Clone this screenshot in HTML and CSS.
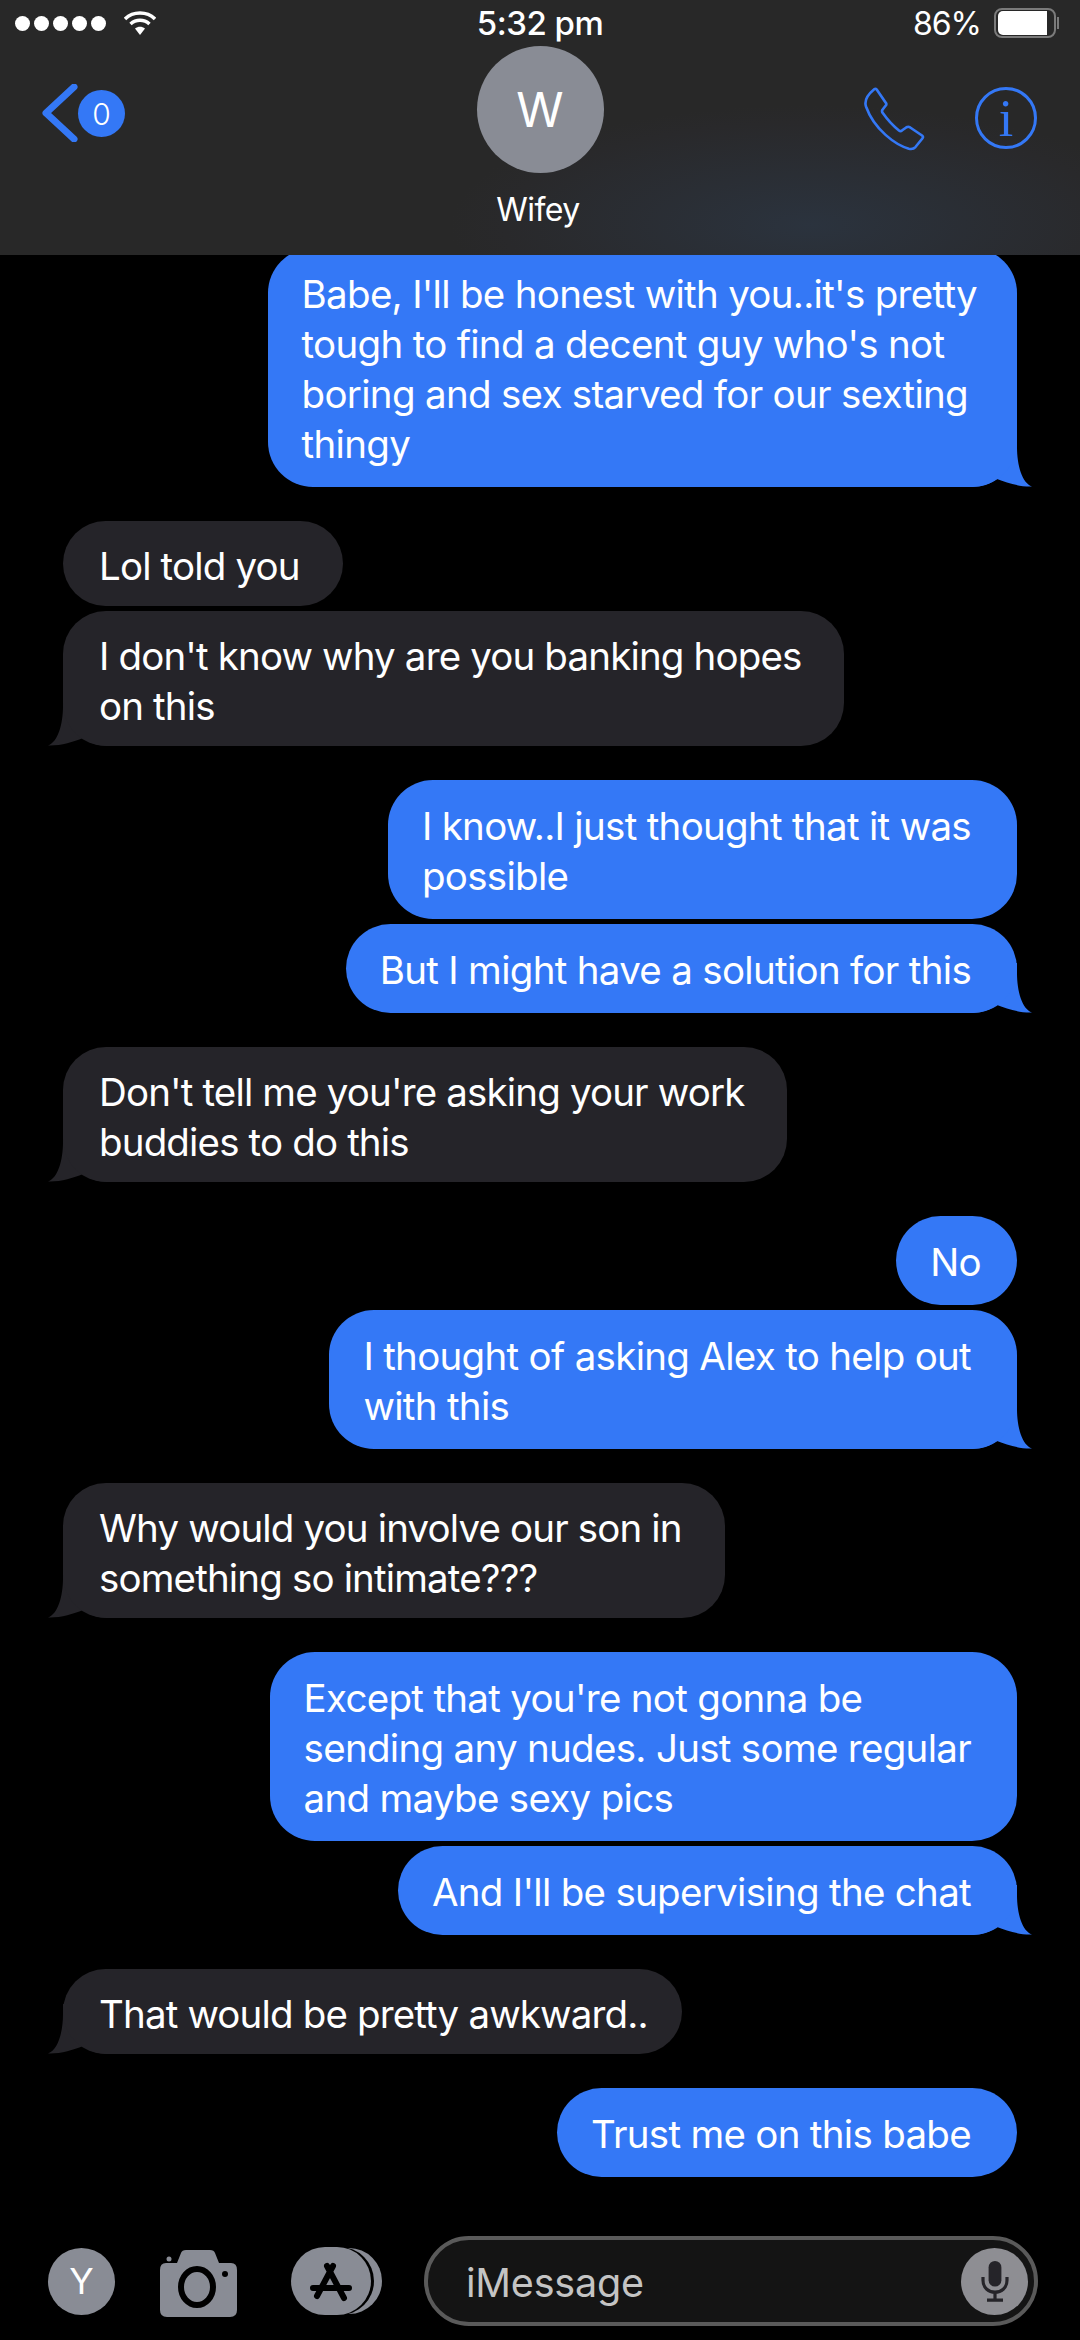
FILE: index.html
```html
<!DOCTYPE html>
<html lang="en">
<head>
  <meta charset="UTF-8">
  <meta name="viewport" content="width=device-width, initial-scale=1.0">
  <title>Wifey</title>
  <link rel="stylesheet" href="styles.css">
</head>
<body>
  <!-- top bar -->
  <header class="top">
    <div class="status-bar">
      <div class="status-left">
        <div class="signal"><i></i><i></i><i></i><i></i><i></i></div>
        <svg class="wifi" viewBox="0 0 32 26">
          <path d="M1 9 C9 1 23 1 31 9" />
          <path d="M6.500 14 C12 9 20 9 25.500 14" />
          <path class="wedge" d="M11 18.500 C14 16 18 16 21 18.500 L16 25 Z" />
        </svg>
      </div>
      <div class="clock">5:32 pm</div>
      <div class="status-right">
        <span>86%</span>
        <div class="battery"><div class="battery-fill"></div></div>
      </div>
    </div>

    <div class="nav">
      <div class="nav-left">
        <svg class="chevron" viewBox="0 0 36 58"><path d="M32 3 L4 29 L32 55" /></svg>
        <div class="badge">0</div>
      </div>
      <div class="contact">
        <div class="avatar">W</div>
        <div class="contact-name">Wifey</div>
      </div>
      <div class="nav-right">
        <svg class="phone" viewBox="-4 -4 188 194">
          <path d="M30 3 Q34 0 38 4 L66 45 Q68 49 65 52 L55 65 Q52 70 56 75 C70 95 85 112 105 128 Q110 132 114 128 L128 118 Q133 115 138 118 L175 143 Q180 147 176 152 L155 178 Q148 186 135 183 C95 172 30 125 5 55 Q-3 30 30 3 Z" />
        </svg>
        <div class="info">i</div>
      </div>
    </div>
  </header>

  <!-- conversation -->
  <main class="thread">
    <div class="msg out tail wide">Babe, I'll be honest with you..it's pretty<br>tough to find a decent guy who's not<br>boring and sex starved for our sexting<br>thingy</div>

    <div class="msg in">Lol told you</div>
    <div class="msg in cont tail">I don't know why are you banking hopes<br>on this</div>

    <div class="msg out">I know..I just thought that it was<br>possible</div>
    <div class="msg out cont tail">But I might have a solution for this</div>

    <div class="msg in tail">Don't tell me you're asking your work<br>buddies to do this</div>

    <div class="msg out short">No</div>
    <div class="msg out cont tail">I thought of asking Alex to help out<br>with this</div>

    <div class="msg in tail">Why would you involve our son in<br>something so intimate???</div>

    <div class="msg out">Except that you're not gonna be<br>sending any nudes. Just some regular<br>and maybe sexy pics</div>
    <div class="msg out cont tail">And I'll be supervising the chat</div>

    <div class="msg in tail short">That would be pretty awkward..</div>

    <div class="msg out">Trust me on this babe</div>
  </main>

  <!-- input row -->
  <footer class="composer">
    <div class="me">Y</div>
    <svg class="camera" viewBox="0 0 77 67">
      <circle class="cam-gray" cx="9" cy="9" r="2.500" />
      <path class="cam-gray" d="M0 20 Q0 13 6 13 L17 13 L21 3 Q22 0 26 0 L50 0 Q54 0 55 3 L59 13 L71 13 Q77 13 77 20 L77 60 Q77 67 70 67 L7 67 Q0 67 0 60 Z" />
      <ellipse class="cam-lens" cx="37" cy="37" rx="16" ry="18" />
      <circle class="cam-dot" cx="65" cy="24" r="3" />
    </svg>
    <svg class="apps" viewBox="0 0 91 68">
      <rect class="app-gray" x="10" y="1" width="81" height="66" rx="33" />
      <rect class="app-gap" x="2" y="0" width="81" height="68" rx="34" />
      <rect class="app-gray" x="0" y="0" width="80" height="68" rx="34" />
      <path class="app-a" d="M42 19 L26 49 M36 19 L53 51 M22 41 L58 41" />
    </svg>
    <div class="input">
      <span class="placeholder">iMessage</span>
      <div class="mic">
        <svg viewBox="0 0 40 54">
          <rect class="mic-head" x="12" y="2" width="16" height="32" rx="8" />
          <path class="mic-line" d="M5 22 L5 26 C5 46 35 46 35 26 L35 22 M20 41 L20 50 M10 51 L30 51" />
        </svg>
      </div>
    </div>
  </footer>
</body>
</html>
```

FILE: styles.css
```css
* {margin:0; padding:0; box-sizing:border-box;}
html {background:#000;}
body,html {
  height:100%; width:100%; overflow:hidden;
  font-family:Inter, "Liberation Sans", Arial, sans-serif;
  color:#fff;
}
body {display:flex; flex-direction:column;}

/* top bar */
.top {
  height:255px; flex:none; position:relative; z-index:2;
  background:radial-gradient(ellipse 360px 120px at 810px 225px,#2b333e,#29292b 85%,#282828);
}
.status-bar {
  height:46px; padding:0 15px;
  display:grid; grid-template-columns:1fr auto 1fr; align-items:center;
  font-size:32px; letter-spacing:-1px;
}
.status-left {display:flex; align-items:center; gap:18px;}
.signal {display:flex; gap:4px;}
.signal i {width:15px; height:15px; border-radius:50%; background:#fff;}
.wifi {width:32px; height:26px;}
.wifi path {fill:none; stroke:#fff; stroke-width:3.500;}
.wifi .wedge {fill:#fff; stroke:none;}
.clock {font-size:33px; font-weight:500; letter-spacing:-0.5px;}
.status-right {display:flex; justify-content:flex-end; align-items:center; gap:13px; padding-right:9px;}
.battery {
  position:relative; width:62px; height:30px; padding:1px 2px;
  border:2px solid #7b7b7b; border-radius:8px;
}
.battery::after {
  content:""; position:absolute; right:-5px; top:7px;
  width:2px; height:12px; background:#7b7b7b;
}
.battery-fill {width:49px; height:100%; background:#fff; border-radius:5px 0 0 5px;}

.nav {display:grid; grid-template-columns:1fr auto 1fr;}
.nav-left {display:flex; align-items:flex-start; padding:38px 0 0 42px;}
.chevron {width:36px; height:58px;}
.chevron path {fill:none; stroke:#3478f6; stroke-width:7; stroke-linecap:round; stroke-linejoin:round;}
.badge {
  width:47px; height:47px; margin-top:6px; border-radius:50%;
  background:#3478f6; font-size:30px; font-weight:300;
  display:flex; justify-content:center; align-items:center;
}
.contact {display:flex; flex-direction:column; align-items:center;}
.avatar {
  width:127px; height:127px; border-radius:50%; background:#898c95;
  display:flex; justify-content:center; align-items:center;
  font-size:48px;
}
.contact-name {font-size:32px; margin:17px 4px 0 0; letter-spacing:-0.5px;}
.nav-right {display:flex; justify-content:flex-end; align-items:flex-start; gap:50px; padding:41px 43px 0 0;}
.phone {width:62px; height:64px;}
.phone path {fill:none; stroke:#3478f6; stroke-width:8; stroke-linejoin:round;}
.info {
  width:62px; height:62px; border-radius:50%; border:3px solid #3478f6;
  color:#3478f6; font-family:"Liberation Serif", serif; font-size:52px;
  display:flex; justify-content:center; align-items:center;
}

/* conversation */
.thread {
  flex:1; overflow:hidden; display:flex; flex-direction:column;
  padding:0 63px; margin-top:-7px;
}
.msg {
  position:relative; margin-top:34px; white-space:nowrap;
  font-size:38.500px; line-height:50px; letter-spacing:-0.700px;
}
.msg:first-child {margin-top:0;}
.msg.cont {margin-top:5px;}
.out {
  align-self:flex-end; background:#3478f6;
  padding:21px 46px 18px 34px; border-radius:45px;
}
.out.wide {padding-right:40px;}
.out.short {padding-right:36px;}
.in {
  align-self:flex-start; background:#252429; letter-spacing:-0.850px;
  padding:20px 43px 15px 36px; border-radius:43px;
}
.in.short {padding-right:34px;}
/* tail sits behind the bubble so it never covers the text */
.tail::after {
  content:""; position:absolute; z-index:-1; bottom:0; width:60px; height:50px;
  clip-path:path("M45 0 L45 10 C45 28 50 46 60 49.500 C48 50 35 46 25 42 C18 47 10 50 0 50 L0 0 Z");
}
.out.tail::after {right:-15px; background:#3478f6;}
.in.tail::after {left:-15px; background:#252429; transform:scaleX(-1);}

/* input row */
.composer {
  flex:none; display:flex; align-items:center;
  padding:0 42px 14px 48px;
}
.me {
  width:67px; height:67px; border-radius:50%; background:#898c95;
  font-size:36px; flex:none;
  display:flex; justify-content:center; align-items:center;
}
.camera {width:77px; height:67px; flex:none; margin:4px 0 0 45px;}
.cam-gray {fill:#898c95;}
.cam-lens {fill:none; stroke:#000; stroke-width:6;}
.cam-dot {fill:#000;}
.apps {width:91px; height:68px; flex:none; margin-left:54px;}
.app-gray {fill:#898c95;}
.app-gap {fill:#000;}
.app-a {fill:none; stroke:#000; stroke-width:6; stroke-linecap:round;}
.input {
  flex:1; height:90px; margin-left:42px; padding:0 6px 0 38px;
  background:#141414; border:4px solid #5a5a5a; border-radius:45px;
  display:flex; justify-content:space-between; align-items:center;
}
.placeholder {font-size:39.500px; color:#c4c4c4; letter-spacing:-0.200px; padding-top:3px;}
.mic {
  width:67px; height:67px; border-radius:50%; background:#8e8e93;
  display:flex; justify-content:center; align-items:center;
}
.mic svg {width:32px; height:46px;}
.mic-head {fill:#252429;}
.mic-line {fill:none; stroke:#252429; stroke-width:4;}
```
